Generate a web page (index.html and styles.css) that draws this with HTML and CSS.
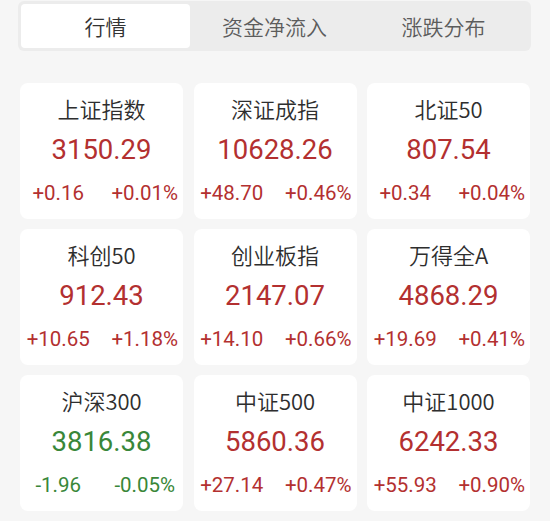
FILE: index.html
```html
<!DOCTYPE html>
<html lang="zh-CN">
<head>
<meta charset="utf-8">
<link rel="stylesheet" href="styles.css">
</head>
<body>
<div class="page">
  <div class="tabs">
    <div class="tab active">行情</div>
    <div class="tab">资金净流入</div>
    <div class="tab">涨跌分布</div>
  </div>
  <div class="grid">
    <div class="card up"><div class="name">上证指数</div><div class="value">3150.29</div><div class="chg"><span>+0.16</span><span>+0.01%</span></div></div>
    <div class="card up"><div class="name">深证成指</div><div class="value">10628.26</div><div class="chg"><span>+48.70</span><span>+0.46%</span></div></div>
    <div class="card up"><div class="name">北证50</div><div class="value">807.54</div><div class="chg"><span>+0.34</span><span>+0.04%</span></div></div>
    <div class="card up"><div class="name">科创50</div><div class="value">912.43</div><div class="chg"><span>+10.65</span><span>+1.18%</span></div></div>
    <div class="card up"><div class="name">创业板指</div><div class="value">2147.07</div><div class="chg"><span>+14.10</span><span>+0.66%</span></div></div>
    <div class="card up"><div class="name">万得全A</div><div class="value">4868.29</div><div class="chg"><span>+19.69</span><span>+0.41%</span></div></div>
    <div class="card down"><div class="name">沪深300</div><div class="value">3816.38</div><div class="chg"><span>-1.96</span><span>-0.05%</span></div></div>
    <div class="card up"><div class="name">中证500</div><div class="value">5860.36</div><div class="chg"><span>+27.14</span><span>+0.47%</span></div></div>
    <div class="card up"><div class="name">中证1000</div><div class="value">6242.33</div><div class="chg"><span>+55.93</span><span>+0.90%</span></div></div>
  </div>
</div>
</body>
</html>
```
FILE: styles.css
```css
html, body {
  margin: 0;
  padding: 0;
  background: #f6f6f6;
}
body {
  font-family: Roboto, "Noto Sans CJK SC", sans-serif;
  width: 550px;
  height: 521px;
  overflow: hidden;
}
.page {
  padding: 1px 19px 0 18px;
}
.tabs {
  display: grid;
  grid-template-columns: 1fr 1fr 1fr;
  background: #ececec;
  border-radius: 6px;
  padding: 3px;
  height: 44px;
}
.tab {
  display: flex;
  align-items: center;
  justify-content: center;
  font-size: 21px;
  font-weight: 350;
  color: #5c5c5c;
  border-radius: 4px;
}
.tab.active {
  background: #fff;
  color: #333;
}
.grid {
  display: grid;
  grid-template-columns: repeat(3, 163px);
  grid-auto-rows: 136px;
  column-gap: 10.5px;
  row-gap: 10px;
  margin: 32px -1px 0 2px;
}
.card {
  background: #fff;
  border-radius: 8px;
  display: flex;
  flex-direction: column;
  align-items: center;
}
.name {
  font-family: "Noto Sans CJK SC", sans-serif;
  font-size: 22px;
  font-weight: 350;
  color: #2e2e2e;
  line-height: 28px;
  margin-top: 11px;
}
.value {
  font-size: 27.5px;
  line-height: 34px;
  margin-top: 11px;
}
.chg {
  display: grid;
  grid-template-columns: 1fr 1fr;
  column-gap: 10px;
  width: 100%;
  font-size: 20.5px;
  line-height: 26px;
  margin-top: 13px;
}
.chg span {
  text-align: center;
}
.up .value, .up .chg {
  color: #b33030;
}
.down .value, .down .chg {
  color: #398739;
}
```
